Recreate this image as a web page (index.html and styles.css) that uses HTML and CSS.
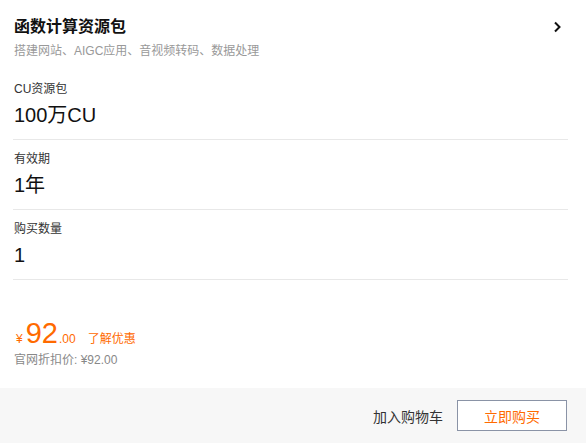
FILE: index.html
```html
<!DOCTYPE html>
<html lang="zh">
<head>
<meta charset="utf-8">
<link rel="stylesheet" href="styles.css">
</head>
<body>
<div class="panel">
  <div class="main">
    <div class="header">
      <div class="titles">
        <div class="title">函数计算资源包</div>
        <div class="subtitle">搭建网站、AIGC应用、音视频转码、数据处理</div>
      </div>
      <svg class="chev" width="10" height="12" viewBox="0 0 10 12"><path d="M3 1.5 L7.5 6 L3 10.5" fill="none" stroke="#111" stroke-width="2"/></svg>
    </div>
    <div class="field">
      <div class="label">CU资源包</div>
      <div class="value">100万CU</div>
    </div>
    <div class="field">
      <div class="label">有效期</div>
      <div class="value">1年</div>
    </div>
    <div class="field">
      <div class="label">购买数量</div>
      <div class="value">1</div>
    </div>
    <div class="price">
      <div class="price-row">
        <span class="yen">¥</span><span class="int">92</span><span class="dec">.00</span><a class="promo">了解优惠</a>
      </div>
      <div class="orig">官网折扣价: ¥92.00</div>
    </div>
  </div>
  <div class="footer">
    <span class="cart">加入购物车</span>
    <button class="buy">立即购买</button>
  </div>
</div>
</body>
</html>
```
FILE: styles.css
```css
html, body {
  margin: 0;
  padding: 0;
  background: #fff;
}
body {
  font-family: "Liberation Sans", Arial, "Noto Sans CJK SC", sans-serif;
  color: #333;
  width: 586px;
  height: 443px;
  overflow: hidden;
}
.panel {
  display: flex;
  flex-direction: column;
  height: 443px;
}
.main {
  flex: 1;
  padding: 0 18px 0 13px;
}
.header {
  display: flex;
  justify-content: space-between;
  align-items: flex-start;
  padding: 16px 0 10px 1px;
}
.title {
  font-size: 16px;
  font-weight: bold;
  line-height: 22px;
  color: #111;
}
.subtitle {
  margin-top: 4px;
  font-size: 12px;
  line-height: 18px;
  color: #999;
}
.chev {
  margin-top: 5px;
  margin-right: 6px;
}
.field {
  padding: 10px 0 10px 1px;
  border-bottom: 1px solid #e8e8e8;
}
.label {
  font-size: 12px;
  line-height: 18px;
  color: #333;
}
.value {
  margin-top: 4px;
  font-size: 20px;
  line-height: 27px;
  color: #111;
}
.price {
  padding: 36px 0 0 1px;
}
.price-row {
  display: flex;
  align-items: baseline;
  color: #ff6a00;
  height: 34px;
}
.yen {
  font-size: 12px;
  margin: 0 3px 0 2px;
}
.int {
  font-size: 29px;
  line-height: 34px;
}
.dec {
  font-size: 12px;
  margin-left: 1px;
}
.promo {
  font-size: 12px;
  margin-left: 12px;
  color: #ff6a00;
}
.orig {
  font-size: 12px;
  line-height: 18px;
  color: #888;
  margin-top: 1px;
}
.footer {
  height: 55px;
  background: #f7f7f7;
  display: flex;
  align-items: center;
  justify-content: flex-end;
  padding-right: 19px;
  gap: 14px;
}
.cart {
  font-size: 14px;
  color: #333;
}
.buy {
  width: 110px;
  height: 31px;
  border: 1px solid #8a93a6;
  background: #fff;
  color: #ff6a00;
  font-size: 14px;
  font-family: inherit;
  padding: 0;
}
```
